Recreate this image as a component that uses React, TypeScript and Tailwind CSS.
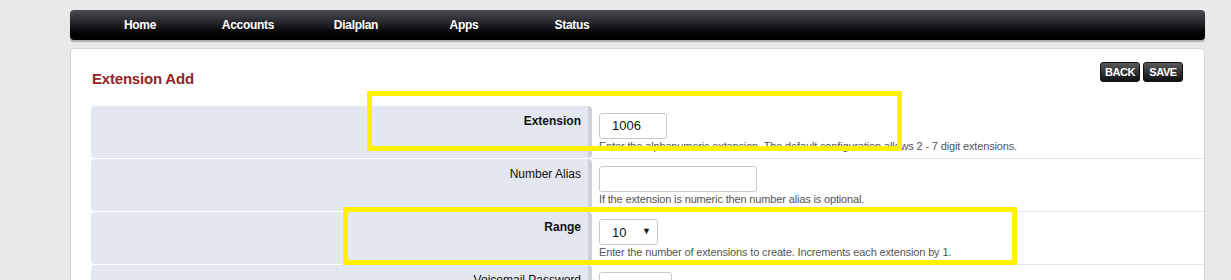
const navItems = ['Home', 'Accounts', 'Dialplan', 'Apps', 'Status'];

const rows = [
  {
    label: 'Extension',
    bold: true,
    kind: 'input',
    value: '1006',
    width: 'w-[68px]',
    help: 'Enter the alphanumeric extension. The default configuration allows 2 - 7 digit extensions.',
  },
  {
    label: 'Number Alias',
    bold: false,
    kind: 'input',
    value: '',
    width: 'w-[158px]',
    help: 'If the extension is numeric then number alias is optional.',
  },
  {
    label: 'Range',
    bold: true,
    kind: 'select',
    value: '10',
    width: 'w-[59px]',
    help: 'Enter the number of extensions to create. Increments each extension by 1.',
  },
  {
    label: 'Voicemail Password',
    bold: false,
    kind: 'input',
    value: '',
    width: 'w-[73px]',
    help: '',
  },
];

const font = { fontFamily: '"Liberation Sans", Arial, sans-serif' };

const App = () => {
  return (
    <div
      className="relative h-[280px] w-[1231px] overflow-hidden bg-[#e9e9e9] pt-[10px] pl-[70px] pr-[26px]"
      style={font}
    >
      {/* top menu */}
      <nav className="flex h-[30px] rounded-[4px] bg-gradient-to-b from-[#4d4c55] via-[#1e1e22] to-[#000000] pl-[16px] shadow-[0_2px_1px_rgba(0,0,0,0.25)]">
        {navItems.map((item) => (
          <a
            key={item}
            className="w-[108px] text-center text-[12px] font-bold leading-[30px] tracking-[-0.3px] text-white"
          >
            {item}
          </a>
        ))}
      </nav>

      {/* main panel */}
      <div className="mt-[8px] h-[300px] rounded-t-[4px] border border-[#d4d4d4] bg-white pl-[20px]">
        <div className="flex h-[57px] items-start justify-between pr-[21px]">
          <h1 className="ml-[1px] mt-[20px] text-[15px] font-bold leading-[20px] tracking-[-0.2px] text-[#952424]">
            Extension Add
          </h1>
          <div className="mt-[13px] flex gap-[3px]">
            {['BACK', 'SAVE'].map((b) => (
              <button
                key={b}
                className="h-[20px] w-[40px] rounded-[3px] border border-[#111] bg-gradient-to-b from-[#5a5a5a] to-[#111] text-[11px] font-bold leading-[18px] tracking-[-0.4px] text-white"
              >
                {b}
              </button>
            ))}
          </div>
        </div>

        <div className="flex flex-col">
          {rows.map((row) => (
            <div key={row.label} className="flex h-[53px]">
              <div
                className={`h-[52px] w-[501px] shrink-0 rounded-[4px] border-r-[4px] border-[#cdd2da] bg-[#e3e8f0] pt-[7px] pr-[7px] text-right text-[12px] leading-[16px] text-[#111] ${
                  row.bold ? 'font-bold' : ''
                }`}
              >
                {row.label}
              </div>
              <div className="flex-1 border-b border-[#e1e5ea] pt-[7px] pl-[7px]">
                {row.kind === 'input' ? (
                  <div
                    className={`${row.width} h-[26px] rounded-[3px] border border-[#c9c9c9] pl-[12px] text-[13px] leading-[24px] text-[#111]`}
                  >
                    {row.value}
                  </div>
                ) : (
                  <div
                    className={`${row.width} flex h-[26px] items-center justify-between rounded-[3px] border border-[#c9c9c9] pl-[12px] pr-[6px] text-[13px] text-[#111]`}
                  >
                    <span className="mt-[2px]">{row.value}</span>
                    <span className="text-[9px]">▼</span>
                  </div>
                )}
                {row.help && (
                  <div className="mt-[1px] text-[11px] leading-[13px] tracking-[-0.15px] text-[#555]">
                    {row.help}
                  </div>
                )}
              </div>
            </div>
          ))}
        </div>
      </div>

      {/* yellow highlight annotations */}
      <div className="absolute left-[367px] top-[91px] h-[60px] w-[535px] border-[5px] border-[#fff200]" />
      <div className="absolute left-[343px] top-[207px] h-[58px] w-[674px] border-[5px] border-[#fff200]" />
    </div>
  );
};

export default App;
